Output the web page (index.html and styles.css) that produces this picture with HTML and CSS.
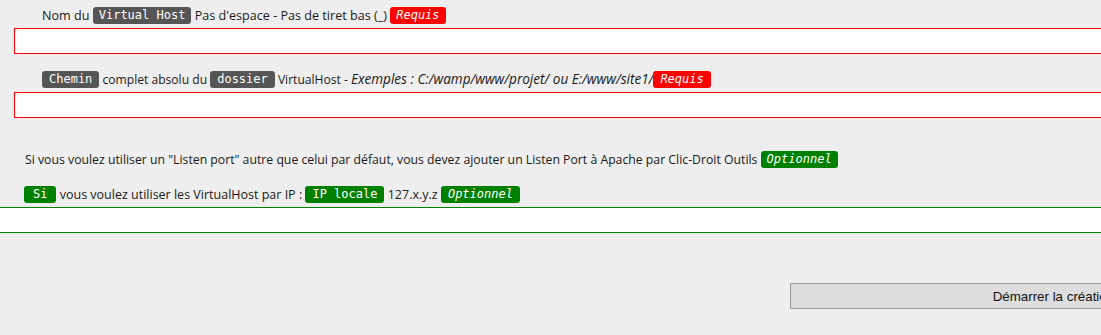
FILE: index.html
```html
<!DOCTYPE html>
<html lang="fr">
<head>
    <meta charset="UTF-8">
    <meta name="viewport" content="width=device-width, initial-scale=1.0">
    <title>Ajouter un VirtualHost</title>
    <link rel="stylesheet" href="styles.css">
</head>
<body>
    <form class="vhost-form">
        <div class="label first">Nom du <span class="tag">Virtual Host</span> Pas d'espace - Pas de tiret bas (_) <span class="tag req">Requis</span></div>
        <input type="text" class="field" name="vh_name">

        <div class="label second"><span class="tag">Chemin</span> complet absolu du <span class="tag">dossier</span> VirtualHost - <em>Exemples : C:/wamp/www/projet/ ou E:/www/site1/</em><span class="tag req">Requis</span></div>
        <input type="text" class="field" name="vh_folder">

        <div class="label port">Si vous voulez utiliser un "Listen port" autre que celui par défaut, vous devez ajouter un Listen Port à Apache par Clic-Droit Outils <span class="tag opt">Optionnel</span></div>

        <div class="label ip"><span class="tag ok si">Si</span> vous voulez utiliser les VirtualHost par IP : <span class="tag ok">IP locale</span> 127.x.y.z <span class="tag opt">Optionnel</span></div>
        <input type="text" class="field field-ip" name="vh_ip">

        <div class="actions">
            <button type="button" class="submit">Démarrer la création du VirtualHost</button>
        </div>
    </form>
</body>
</html>
```
FILE: styles.css
```css
html, body { overflow: hidden; }
body { margin: 0; background: #eee; color: #1a1a1a; font-family: "Open Sans", sans-serif; font-size: 13px; }
.vhost-form { padding-top: 7px; width: 1300px; }
.label { height: 17px; line-height: 17px; white-space: nowrap; }
.label em { font-style: italic; font-size: 13.55px; }
.first { padding-left: 42px; font-size: 12.6px; }
.second { padding-left: 42px; margin-top: 17px; font-size: 12.1px; }
.port { padding-left: 25px; margin-top: 33px; font-size: 12.25px; }
.ip { padding-left: 24px; margin-top: 18px; font-size: 12.5px; }
.tag { display: inline-block; height: 17px; line-height: 17px; padding: 0 6px; vertical-align: top; border-radius: 3px; background: #555; color: #fff; font-family: "DejaVu Sans Mono", monospace; font-size: 12px; font-style: normal; }
.second .tag, .ip .tag { padding: 0 7px; }
.tag.req { background: #f00; font-style: italic; }
.tag.ok { background: #008000; }
.tag.opt { background: #008000; font-style: italic; }
.ip .tag.si { padding: 0 9px; }
.field { display: block; box-sizing: border-box; height: 26px; margin: 4px 0 0 14px; width: 1250px; border: 1px solid #f00; background: #fff; padding: 2px 4px; }
.field-ip { margin-left: -1px; width: 1290px; border-color: #008000; }
.actions { margin-top: 50px; padding-left: 790px; }
.submit { width: 614px; height: 26px; background: #ddd; border: 1px solid #999; font-family: "Liberation Sans", Arial, sans-serif; font-size: 13.33px; color: #111; padding: 0; }
```
